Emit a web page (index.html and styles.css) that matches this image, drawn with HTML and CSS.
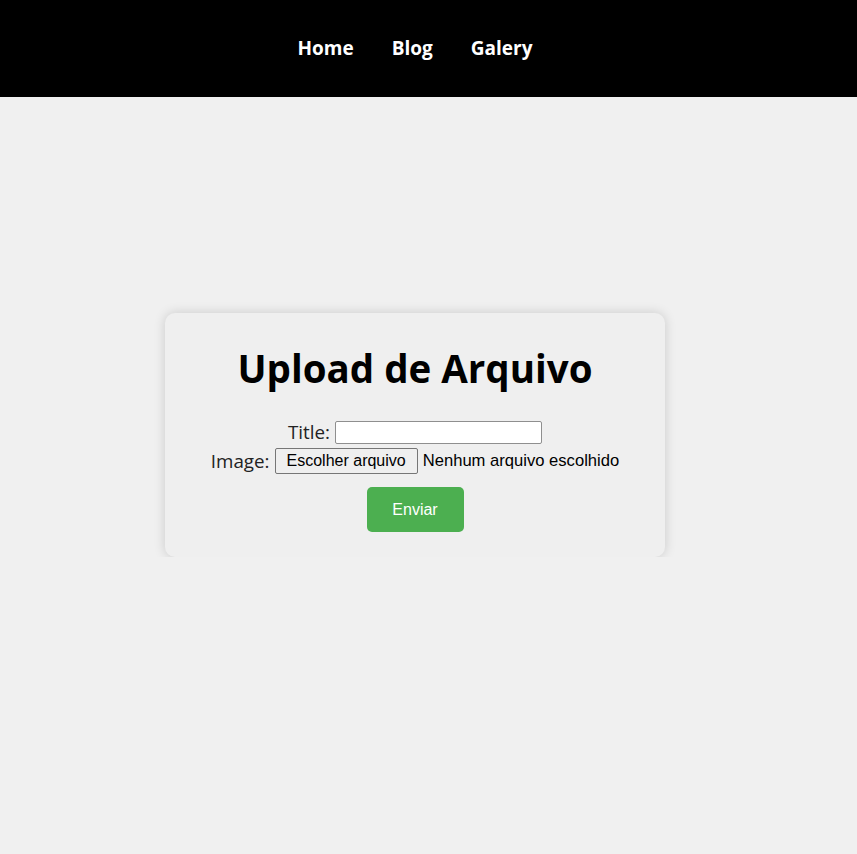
FILE: index.html
```html
<!DOCTYPE html>
<html lang="pt-BR">
<head>
<meta charset="utf-8">
<title>Upload de Arquivo</title>
<link rel="stylesheet" href="styles.css">
</head>
<body>
<header class="topbar">
  <nav class="nav">
    <a class="nav-link" href="#">Home</a>
    <a class="nav-link" href="#">Blog</a>
    <a class="nav-link" href="#">Galery</a>
  </nav>
</header>
<main class="page">
  <form class="card">
    <h1 class="card-title">Upload de Arquivo</h1>
    <div class="field">
      <label class="field-label" for="title">Title:</label>
      <input class="text-input" id="title" type="text">
    </div>
    <div class="field">
      <span class="field-label">Image:</span>
      <span class="file-btn">Escolher arquivo</span>
      <span class="file-name">Nenhum arquivo escolhido</span>
    </div>
    <button class="submit" type="button">Enviar</button>
  </form>
</main>
</body>
</html>
```
FILE: styles.css
```css
html, body {
  margin: 0;
  padding: 0;
  background: #f0f0f0;
  font-family: "Open Sans", "Noto Sans", sans-serif;
}

.topbar {
  background: #000;
  height: 97px;
  padding-right: 27px;
  display: flex;
  align-items: center;
  justify-content: center;
}

.nav {
  display: flex;
  gap: 38px;
  margin-top: -2px;
}

.nav-link {
  color: #fff;
  text-decoration: none;
  font-weight: 700;
  font-size: 19px;
}

.page {
  padding: 216px 27px 0 0;
  display: flex;
  justify-content: center;
}

.card {
  width: 500px;
  height: 244px;
  box-sizing: border-box;
  background: #efefef;
  border-radius: 10px;
  box-shadow: 0 0 12px rgba(0, 0, 0, 0.16);
  display: flex;
  flex-direction: column;
  align-items: center;
  padding-top: 30px;
}

.card-title {
  margin: 0 0 26px;
  font-size: 38.5px;
  font-weight: 700;
  color: #000;
  line-height: 50px;
}

.field {
  display: flex;
  align-items: center;
  justify-content: center;
  gap: 5px;
  height: 26px;
  margin-bottom: 3px;
}

.field-label {
  font-size: 18.8px;
  color: #222;
}

.text-input {
  width: 207px;
  height: 23px;
  box-sizing: border-box;
  border: 1px solid #8f8f8f;
  border-radius: 2px;
  background: #fff;
  padding: 0 4px;
}

.file-btn {
  font-family: "Liberation Sans", Arial, sans-serif;
  font-size: 16px;
  color: #000;
  background: #efefef;
  border: 1px solid #767676;
  border-radius: 2px;
  height: 26px;
  box-sizing: border-box;
  padding: 0 11px;
  display: flex;
  align-items: center;
}

.file-name {
  font-family: "Liberation Sans", Arial, sans-serif;
  font-size: 16.6px;
  color: #000;
}

.submit {
  margin-top: 10px;
  width: 97px;
  height: 45px;
  background: #4caf50;
  color: #fff;
  border: none;
  border-radius: 5px;
  font-family: "Liberation Sans", Arial, sans-serif;
  font-size: 16px;
}
```
